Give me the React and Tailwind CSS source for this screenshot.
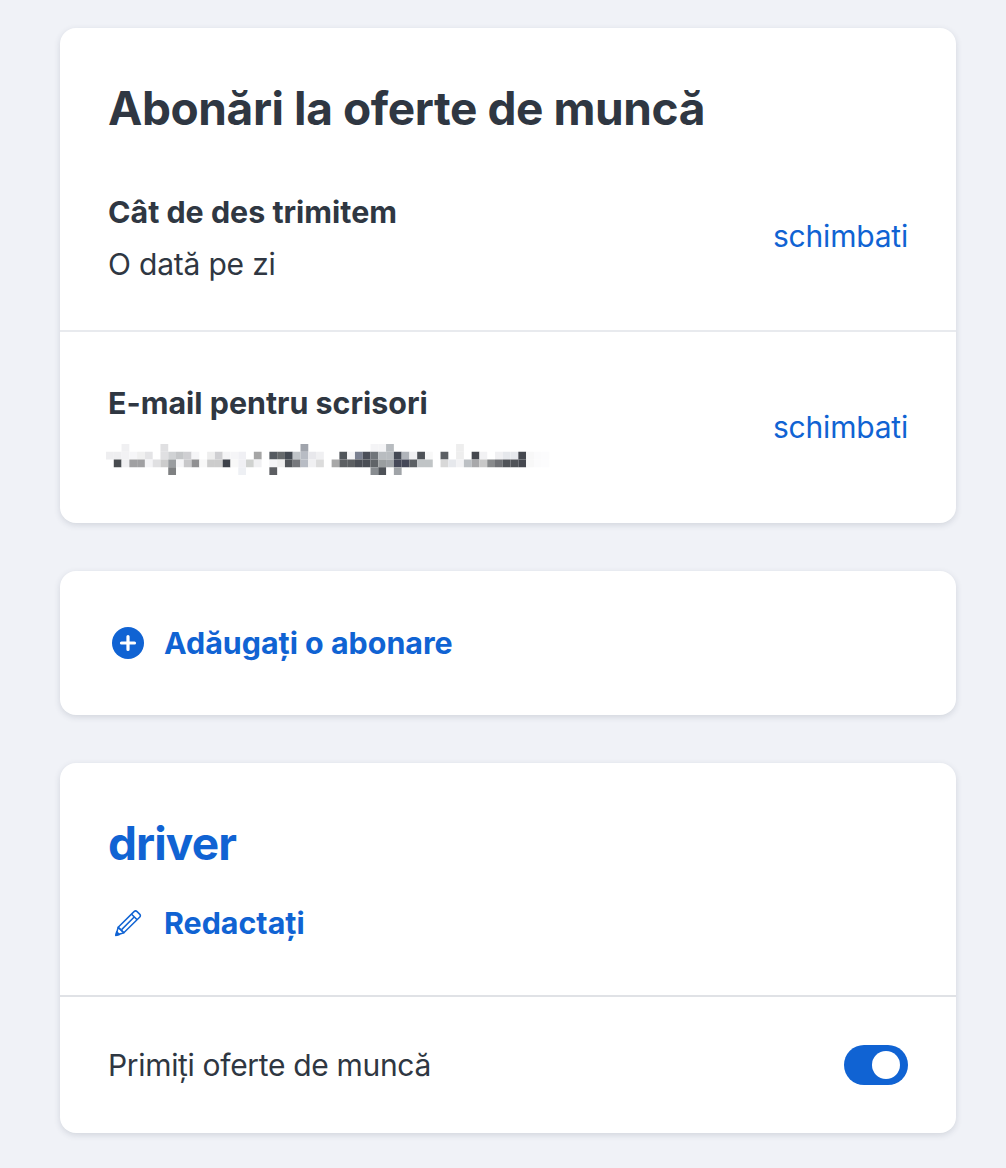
import React from "react";

// mosaic over the hidden e-mail address: [column, row, colour]
const mosaic = [
  [2, 0, "#f0f0f2"], [7, 0, "#e0e0e2"], [25, 0, "#a0a4ac"], [34, 0, "#f4f4f6"], [35, 0, "#f4f4f6"], [36, 0, "#b8bcc0"], [45, 0, "#eeeeee"],
  [0, 1, "#eeeef0"], [1, 1, "#eeeef0"], [2, 1, "#f2f2f4"], [3, 1, "#f6f6f8"], [4, 1, "#f0f0f0"], [5, 1, "#e4e4e6"], [7, 1, "#e0e0e2"], [8, 1, "#d0d2d4"], [9, 1, "#c4c6c8"], [10, 1, "#cfcfd2"], [11, 1, "#f5f5f7"], [13, 1, "#eeeeee"], [14, 1, "#cfcfd2"], [15, 1, "#f4f4f6"], [16, 1, "#f5f5f7"], [17, 1, "#f0f0f4"], [19, 1, "#a5a5a5"], [21, 1, "#555a60"], [22, 1, "#666a6c"], [23, 1, "#444a52"], [24, 1, "#c0c4c8"], [25, 1, "#b8bcc4"], [26, 1, "#e8e8ec"], [27, 1, "#f0f0f2"],
  [30, 1, "#50555a"], [31, 1, "#f4f4f6"], [32, 1, "#7a8090"], [33, 1, "#4a4e58"], [34, 1, "#70757a"], [35, 1, "#b8bcc0"], [36, 1, "#b8bcc0"], [37, 1, "#454a55"], [38, 1, "#b0b4ba"], [39, 1, "#f0f0f2"], [40, 1, "#4e5258"], [41, 1, "#f8f8f8"], [43, 1, "#5c6064"], [45, 1, "#eeeeee"], [47, 1, "#45484e"], [48, 1, "#f2f2f4"], [50, 1, "#f0f0f2"], [51, 1, "#e6e8ec"], [52, 1, "#e6e8ec"], [53, 1, "#45484f"], [54, 1, "#f8f8f8"], [55, 1, "#fbfbfc"], [56, 1, "#fcfcfd"],
  [1, 2, "#484c50"], [2, 2, "#f0f0f2"], [3, 2, "#a0a0a2"], [4, 2, "#a0a0a2"], [5, 2, "#f4f4f6"], [6, 2, "#e0e0e2"], [7, 2, "#cccccc"], [8, 2, "#9a9da0"], [9, 2, "#f5f5f7"], [10, 2, "#c8c8ca"], [11, 2, "#909092"], [12, 2, "#f8f8f8"], [13, 2, "#cccccc"], [14, 2, "#cccccc"], [15, 2, "#3c4048"], [16, 2, "#f8f8f8"], [17, 2, "#f0f0f4"], [18, 2, "#d0d2d0"], [19, 2, "#f0f0f2"], [21, 2, "#f4f4f6"], [22, 2, "#eeeeee"], [23, 2, "#505458"], [24, 2, "#76787c"], [25, 2, "#b8bcc4"], [26, 2, "#f0f0f2"], [27, 2, "#dcdcdc"],
  [29, 2, "#a8a8a8"], [30, 2, "#5c5f62"], [31, 2, "#5c5f62"], [32, 2, "#4a4e55"], [33, 2, "#4a4e55"], [34, 2, "#606468"], [35, 2, "#9a9ea0"], [36, 2, "#a0a4a8"], [37, 2, "#454858"], [38, 2, "#454858"], [39, 2, "#5c6064"], [40, 2, "#c0c4c6"], [41, 2, "#c0c4c6"], [43, 2, "#d8d8d8"], [44, 2, "#e6e8ec"], [45, 2, "#f2f2f4"], [46, 2, "#bcc0c4"], [47, 2, "#a8a8aa"], [48, 2, "#c8c8c8"], [49, 2, "#888a8c"], [50, 2, "#707276"], [51, 2, "#505358"], [52, 2, "#505358"], [53, 2, "#45484f"], [54, 2, "#f8f8f8"], [55, 2, "#fbfbfc"], [56, 2, "#fcfcfd"],
  [8, 3, "#7e8082"], [17, 3, "#eef0f4"], [21, 3, "#5c5e62"], [34, 3, "#888c90"], [35, 3, "#4e5258"], [37, 3, "#a0a4a8"],
];

const HiddenEmail = () => (
  <svg width="445" height="32" viewBox="0 0 445 32" className="mt-[21px] -ml-[2px]">
    {mosaic.map(([col, row, fill]) => (
      <rect key={col + "-" + row} x={col * 7.78} y={row * 7.75} width="7.78" height="7.75" fill={fill} />
    ))}
  </svg>
);

const PlusIcon = () => (
  <svg width="32" height="32" viewBox="0 0 32 32">
    <circle cx="16" cy="16" r="16" fill="#1063d3" />
    <path d="M16 9.5v13M9.5 16h13" stroke="#fff" strokeWidth="3.2" strokeLinecap="round" />
  </svg>
);

const PencilIcon = () => (
  <svg width="28" height="28" viewBox="0 0 28 28" fill="none" stroke="#1063d3" strokeWidth="1.5" strokeLinejoin="round">
    <path d="M20 2.6a2.2 2.2 0 0 1 3.1 0l2.5 2.5a2.2 2.2 0 0 1 0 3.1L9.8 23.8 4.2 18.2z" />
    <path d="M17.6 5.2l5.4 5.4M7.6 20.6L20.2 8" />
    <path d="M4.2 18.2l5.6 5.6-7.8 2.4z" />
    <path d="M1.8 26.4l.9-3.6 2.7 2.7z" fill="#1063d3" />
  </svg>
);

const Toggle = () => (
  <div className="flex h-10 w-16 items-center justify-end rounded-full bg-[#1063d3] pr-2">
    <div className="h-7 w-7 rounded-full bg-white"></div>
  </div>
);

const labelClass = "text-[30.4px] leading-10 font-bold tracking-normal";

const Row = ({ label, children, className }) => (
  <div className={`flex items-center justify-between px-12 ${className}`}>
    <div>
      <div className={labelClass}>{label}</div>
      {children}
    </div>
    <a className="mb-1 text-[30px] tracking-[-0.2px] text-[#1063d3]">schimbati</a>
  </div>
);

const cardClass = "rounded-2xl bg-white shadow-[0_2px_6px_rgba(50,60,90,0.16)]";

const App = () => {
  return (
    <div className="flex min-h-[1168px] flex-col gap-12 bg-[#f0f2f7] pt-7 pr-[50px] pl-[60px] font-['Inter',sans-serif] text-[#2f3742]">
      <section className={cardClass}>
        <h1 className="px-12 pt-[52px] pb-14 text-[46px] leading-[56px] font-bold tracking-[-0.4px]">Abonări la oferte de muncă</h1>
        <Row label="Cât de des trimitem" className="border-b-2 border-[#e8eaee] pb-[46px]">
          <div className="mt-3 text-[30px] leading-10 tracking-[-0.2px]">O dată pe zi</div>
        </Row>
        <Row label="E-mail pentru scrisori" className="pt-[51px] pb-[47px]">
          <HiddenEmail />
        </Row>
      </section>

      <section className={`${cardClass} flex h-36 items-center gap-4 px-12`}>
        <div className="flex w-10 justify-center"><PlusIcon /></div>
        <a className={`${labelClass} text-[#1063d3]`}>Adăugați o abonare</a>
      </section>

      <section className={cardClass}>
        <div className="border-b-2 border-[#e0e2e6] px-12 pt-[52px] pb-[52px]">
          <h2 className="text-[46px] leading-[56px] font-bold tracking-[-0.9px] text-[#1063d3]">driver</h2>
          <div className="mt-8 flex items-center gap-4">
            <div className="flex w-10 justify-center"><PencilIcon /></div>
            <a className={`${labelClass} text-[#1063d3]`}>Redactați</a>
          </div>
        </div>
        <div className="flex items-center justify-between px-12 py-12">
          <span className="text-[30px] leading-10 tracking-[-0.33px]">Primiți oferte de muncă</span>
          <Toggle />
        </div>
      </section>
    </div>
  );
};

export default App;
